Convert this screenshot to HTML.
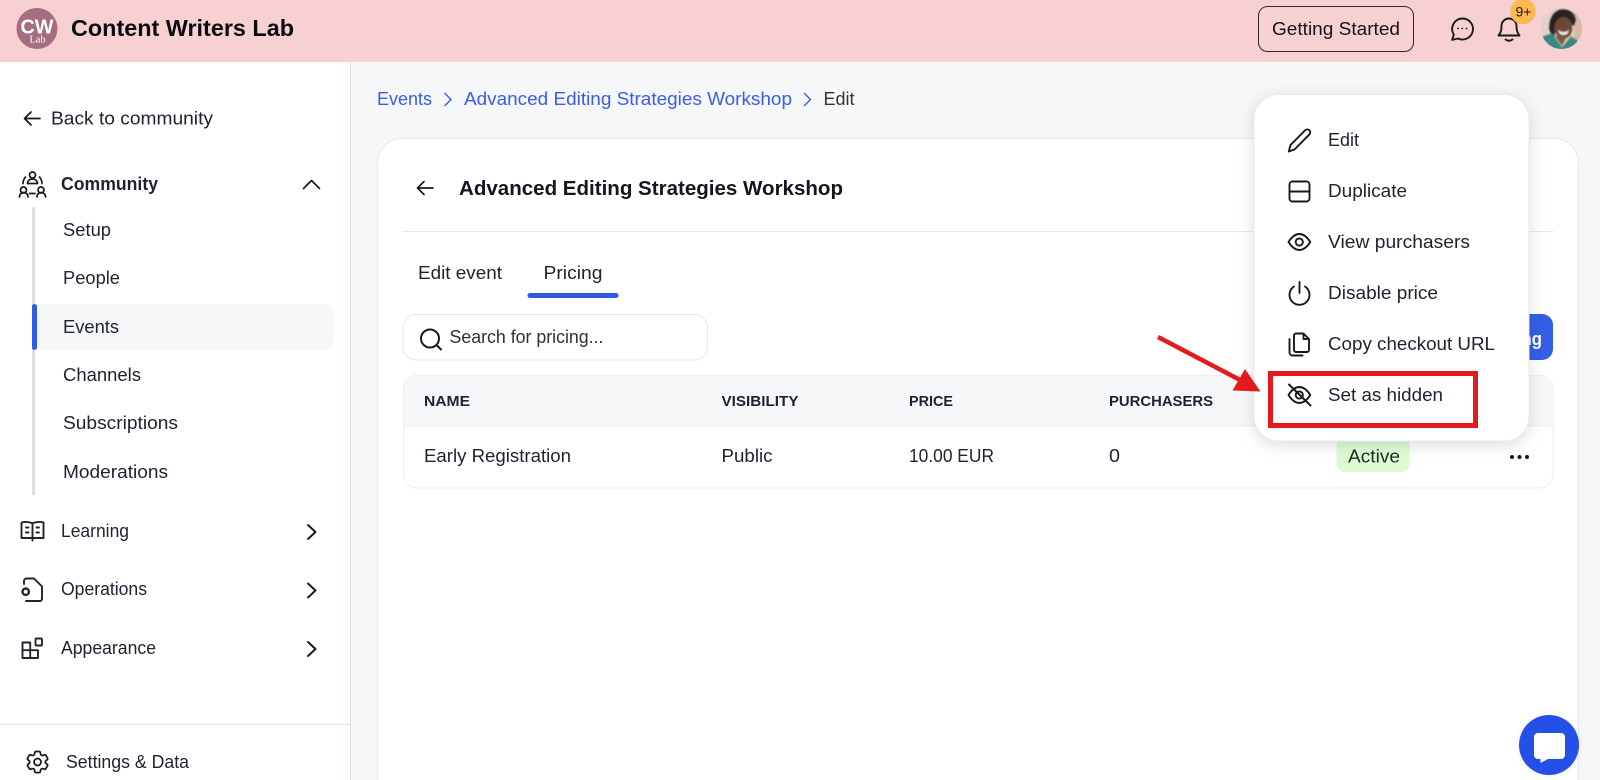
<!DOCTYPE html>
<html lang="en">
<head>
<meta charset="utf-8">
<title>Content Writers Lab</title>
<style>
html,body{margin:0;padding:0;width:1600px;height:780px;overflow:hidden;background:#f6f7f9}
svg{display:block}
text{font-family:"Liberation Sans",sans-serif;fill:#1d2230;font-size:18px}
.b{font-weight:700}
.i{fill:none;stroke:#1a1a1a;stroke-width:1.9;stroke-linecap:round;stroke-linejoin:round}
.h{font-size:15px;font-weight:700}
</style>
</head>
<body>
<svg width="1600" height="780" viewBox="0 0 1600 780" xmlns="http://www.w3.org/2000/svg">
<defs>
<filter id="sh" x="-20%" y="-20%" width="140%" height="140%"><feDropShadow dx="0" dy="4" stdDeviation="8" flood-color="#000" flood-opacity=".13"/></filter>
<filter id="soft"><feGaussianBlur stdDeviation=".8"/></filter>
<clipPath id="av"><circle cx="1561.500" cy="28.500" r="20.500"/></clipPath>
<clipPath id="thead"><rect x="403" y="375" width="1150" height="51"/></clipPath>
<radialGradient id="glow"><stop offset=".6" stop-color="#000" stop-opacity=".07"/><stop offset="1" stop-color="#000" stop-opacity="0"/></radialGradient>
</defs>

<rect width="1600" height="780" fill="#f6f7f9"/>

<!-- Sidebar -->
<rect x="0" y="62" width="350" height="718" fill="#fff"/>
<rect x="350" y="62" width="1" height="718" fill="#dde1e7"/>

<!-- Header -->
<rect width="1600" height="62" fill="#f7d0d1"/>
<circle cx="37" cy="28.500" r="20.500" fill="#a56d7f"/>
<text x="20.500" y="33.500" class="b" style="font-size:20px;fill:#fff" textLength="33" lengthAdjust="spacingAndGlyphs">CW</text>
<text x="29.500" y="42.500" style="font-family:'Liberation Serif',serif;font-size:10px;fill:#fff" textLength="16" lengthAdjust="spacingAndGlyphs">Lab</text>
<text x="71" y="36" class="b" style="font-size:23px;fill:#0b0b0f" textLength="223" lengthAdjust="spacingAndGlyphs">Content Writers Lab</text>

<rect x="1258.500" y="6.500" width="155" height="45" rx="9" fill="none" stroke="#2d2b2e" stroke-width="1"/>
<text x="1272" y="35" textLength="128" lengthAdjust="spacingAndGlyphs" style="fill:#12151f">Getting Started</text>
<path class="i" d="M1462.500 18.500a10.500 10.500 0 1 1-4.500 20l-5.800 1.300 1.600-5.200a10.500 10.500 0 0 1 8.700-16.100z"/>
<g fill="#1a1a1a"><circle cx="1458" cy="28.500" r=".9"/><circle cx="1462.300" cy="28.500" r=".9"/><circle cx="1466.500" cy="28.500" r=".9"/></g>
<path class="i" d="M1498.500 35.500h21c-2-2.500-3-4.500-3-9.500a7.500 7.500 0 0 0-15 0c0 5-1 7-3 9.500z"/>
<path class="i" d="M1505.500 39.500q3.500 2.500 7 0"/>
<circle cx="1523" cy="11.500" r="12.800" fill="#fdb84e"/>
<text x="1515.500" y="16.500" style="font-size:14px;fill:#1a1a1a" textLength="16" lengthAdjust="spacingAndGlyphs">9+</text>
<g clip-path="url(#av)"><g filter="url(#soft)">
<rect x="1538" y="5" width="48" height="48" fill="#e0d3c9"/>
<rect x="1574" y="5" width="12" height="48" fill="#d9b8a4"/>
<path d="M1549 30c-1-12 5-21 14-21s13 6 13 12l-2 5-10-5-8 6-2 14z" fill="#2a2220"/>
<ellipse cx="1563.500" cy="28" rx="9" ry="11" fill="#6d4636"/>
<path d="M1558 30q5.500 4 11 0q-1 5-5.500 5t-5.500-5z" fill="#f2ece8"/>
<path d="M1541 37l11-4 10 14 9-11 10 7v11h-40z" fill="#38897f"/>
<path d="M1555 36l7 10 6-11-5 1z" fill="#835542"/>
</g></g>

<!-- Sidebar content -->
<path class="i" d="M40 118.500H24.500M31 112l-6.500 6.500 6.500 6.500" style="stroke-width:1.700"/>
<text x="51" y="124.500" textLength="162" lengthAdjust="spacingAndGlyphs">Back to community</text>

<g class="i" style="stroke-width:1.700">
<circle cx="32.500" cy="175" r="3"/><path d="M27.500 183.500c0-6 10-6 10 0z"/>
<circle cx="23.500" cy="190" r="3"/><path d="M19.500 197c0-6 8.500-6 8.500 0"/>
<circle cx="41" cy="190" r="3"/><path d="M37 197c0-6 8.500-6 8.500 0"/>
<path d="M25.500 177q-2.500 3-2.500 6.500M39.500 177q2.500 3 2.500 6.500M29.500 193.500h5.500"/>
</g>
<text x="61" y="190" class="b" textLength="97" lengthAdjust="spacingAndGlyphs">Community</text>
<path class="i" d="M303.500 188.500l8-8 8 8" style="stroke-width:1.700"/>

<rect x="32" y="207" width="3" height="288" fill="#e0dede"/>
<rect x="34" y="304" width="300" height="46" rx="10" fill="#f6f7f9"/>
<rect x="32" y="304" width="5" height="46" rx="2.500" fill="#2f5be7"/>
<text x="63" y="236" textLength="48" lengthAdjust="spacingAndGlyphs">Setup</text>
<text x="63" y="284" textLength="57" lengthAdjust="spacingAndGlyphs">People</text>
<text x="63" y="333" textLength="56" lengthAdjust="spacingAndGlyphs">Events</text>
<text x="63" y="381" textLength="78" lengthAdjust="spacingAndGlyphs">Channels</text>
<text x="63" y="429" textLength="115" lengthAdjust="spacingAndGlyphs">Subscriptions</text>
<text x="63" y="478" textLength="105" lengthAdjust="spacingAndGlyphs">Moderations</text>

<g class="i" style="stroke-width:1.900;stroke:#23232d">
<path d="M21.500 522.500q6-1.500 11 .8 5-2.300 11-.8v15.500h-22zM32.500 523.300v17.200"/>
<path d="M26 527.500h2.500M26 532.500h2.500M36.500 527.500h2.500M36.500 532.500h2.500"/>
</g>
<text x="61" y="537" textLength="68" lengthAdjust="spacingAndGlyphs">Learning</text>
<path class="i" d="M308 525l7.500 7-7.500 7" style="stroke-width:2"/>

<g class="i" style="stroke-width:1.900;stroke:#23232d">
<path d="M24 584v-3a2.500 2.500 0 0 1 2.500-2.500h7.500l8 8v12.500a2 2 0 0 1-2 2H26"/>
<circle cx="25.700" cy="591.700" r="3.200" stroke-width="2.400"/>
</g>
<text x="61" y="595" textLength="86" lengthAdjust="spacingAndGlyphs">Operations</text>
<path class="i" d="M308 583.500l7.500 7-7.500 7" style="stroke-width:2"/>

<g class="i" style="stroke-width:1.900;stroke:#23232d">
<path d="M38 650.200v7.800H22.500v-15.500h7.700v7.700zM30.200 650.200H22.500M30.200 650.200V658"/>
<rect x="35.500" y="638.500" width="6.500" height="7" rx="1"/>
</g>
<text x="61" y="654" textLength="95" lengthAdjust="spacingAndGlyphs">Appearance</text>
<path class="i" d="M308 642l7.500 7-7.500 7" style="stroke-width:2"/>

<rect x="0" y="724" width="350" height="1" fill="#dde1e7"/>
<g transform="translate(23.500 748) scale(1.170)" class="i" style="stroke-width:1.500">
<path d="M9.594 3.940c.09-.542.56-.94 1.110-.94h2.593c.55 0 1.020.398 1.110.94l.213 1.281c.063.374.313.686.645.87.074.04.147.083.22.127.325.196.72.257 1.075.124l1.217-.456a1.125 1.125 0 0 1 1.370.49l1.296 2.247a1.125 1.125 0 0 1-.26 1.431l-1.003.827c-.293.241-.438.613-.43.992a7.723 7.723 0 0 1 0 .255c-.008.378.137.75.43.991l1.004.827c.424.35.534.955.26 1.430l-1.298 2.247a1.125 1.125 0 0 1-1.369.491l-1.217-.456c-.355-.133-.75-.072-1.076.124a6.470 6.470 0 0 1-.22.128c-.331.183-.581.495-.644.869l-.213 1.281c-.09.543-.56.94-1.110.94h-2.594c-.55 0-1.019-.398-1.110-.94l-.213-1.281c-.062-.374-.312-.686-.644-.87a6.520 6.520 0 0 1-.22-.127c-.325-.196-.72-.257-1.076-.124l-1.217.456a1.125 1.125 0 0 1-1.369-.49l-1.297-2.247a1.125 1.125 0 0 1 .26-1.431l1.004-.827c.292-.24.437-.613.43-.991a6.932 6.932 0 0 1 0-.255c.007-.38-.138-.751-.43-.992l-1.004-.827a1.125 1.125 0 0 1-.26-1.430l1.297-2.247a1.125 1.125 0 0 1 1.370-.491l1.216.456c.356.133.751.072 1.076-.124.072-.044.146-.086.22-.128.332-.183.582-.495.644-.869l.214-1.280Z"/>
<circle cx="12" cy="12" r="3"/>
</g>
<text x="66" y="768" textLength="123" lengthAdjust="spacingAndGlyphs">Settings &amp; Data</text>

<!-- Breadcrumb -->
<text x="377" y="105" style="fill:#3b5ce8" textLength="55" lengthAdjust="spacingAndGlyphs">Events</text>
<path d="M444.500 93l6.500 6.500-6.500 6.500" fill="none" stroke="#3b5ce8" stroke-width="1.400"/>
<text x="464" y="105" style="fill:#3b5ce8" textLength="328" lengthAdjust="spacingAndGlyphs">Advanced Editing Strategies Workshop</text>
<path d="M804 93l6.500 6.500-6.500 6.500" fill="none" stroke="#3b5ce8" stroke-width="1.400"/>
<text x="823.500" y="105" style="fill:#333" textLength="31" lengthAdjust="spacingAndGlyphs">Edit</text>

<!-- Card -->
<path d="M377.500 780V163.500a25 25 0 0 1 25-25h1151a25 25 0 0 1 25 25V780" fill="#fff" stroke="#e6e8ec"/>
<path class="i" d="M433 188H417.500M424 181.500l-6.500 6.500 6.500 6.500" style="stroke-width:1.700"/>
<text x="459" y="195" class="b" style="font-size:20px;fill:#14161f" textLength="384" lengthAdjust="spacingAndGlyphs">Advanced Editing Strategies Workshop</text>
<rect x="402" y="231" width="1151" height="1" fill="#e8e9ec"/>

<text x="418" y="279" textLength="84" lengthAdjust="spacingAndGlyphs">Edit event</text>
<text x="543.500" y="279" textLength="59" lengthAdjust="spacingAndGlyphs">Pricing</text>
<rect x="527.500" y="293" width="91" height="5" rx="2.500" fill="#2f5be0"/>

<rect x="403" y="314.500" width="304.500" height="45.500" rx="13" fill="#fff" stroke="#e6e8ec"/>
<circle cx="430" cy="338.500" r="9" class="i" style="stroke-width:2"/>
<path class="i" d="M436.500 345l4.500 4.500" style="stroke-width:2"/>
<text x="449.500" y="343" style="fill:#2e3138" textLength="154" lengthAdjust="spacingAndGlyphs">Search for pricing...</text>

<rect x="1430" y="314" width="123" height="46" rx="11" fill="#335ee6"/>
<text x="1448" y="345" class="b" style="fill:#fff" textLength="94" lengthAdjust="spacingAndGlyphs">Add pricing</text>

<!-- Table -->
<rect x="403.500" y="375.500" width="1149.500" height="112.500" rx="13" fill="#fff" stroke="#eceef1"/>
<g clip-path="url(#thead)"><rect x="404" y="376" width="1148" height="60" rx="13" fill="#f6f7f9"/></g>
<rect x="404" y="425.500" width="1149" height="1" fill="#eceef1"/>
<text x="424" y="406" class="h" textLength="46" lengthAdjust="spacingAndGlyphs">NAME</text>
<text x="721.500" y="406" class="h" textLength="77" lengthAdjust="spacingAndGlyphs">VISIBILITY</text>
<text x="909" y="406" class="h" textLength="44" lengthAdjust="spacingAndGlyphs">PRICE</text>
<text x="1109" y="406" class="h" textLength="104" lengthAdjust="spacingAndGlyphs">PURCHASERS</text>
<text x="424" y="462" textLength="147" lengthAdjust="spacingAndGlyphs">Early Registration</text>
<text x="721.500" y="462" textLength="51" lengthAdjust="spacingAndGlyphs">Public</text>
<text x="909" y="462" textLength="85" lengthAdjust="spacingAndGlyphs">10.00 EUR</text>
<text x="1109" y="462" textLength="11" lengthAdjust="spacingAndGlyphs">0</text>
<rect x="1336.500" y="436" width="73" height="36" rx="8" fill="#dffbd4"/>
<text x="1348" y="462.500" style="fill:#1f2a22" textLength="52" lengthAdjust="spacingAndGlyphs">Active</text>
<g fill="#1a1a1a"><circle cx="1512" cy="457" r="2"/><circle cx="1519.500" cy="457" r="2"/><circle cx="1527" cy="457" r="2"/></g>

<!-- Popup -->
<rect x="1254" y="94.500" width="275" height="346.500" rx="25" fill="#fff" stroke="#e9eaec" filter="url(#sh)"/>

<path class="i" d="M1290.500 145L1305.400 130a3 3 0 0 1 4.200 4.200L1294.500 149.500l-5.700 2z"/>
<text x="1328" y="146" textLength="31" lengthAdjust="spacingAndGlyphs">Edit</text>

<rect class="i" x="1289.500" y="181.500" width="20" height="20" rx="3"/>
<path class="i" d="M1289.500 191.500h20"/>
<text x="1328" y="197" textLength="79" lengthAdjust="spacingAndGlyphs">Duplicate</text>

<path class="i" d="M1288.500 242c3.500-5.500 7-8 10.800-8s7.500 2.500 11 8c-3.500 5.500-7.200 8-11 8s-7.300-2.500-10.800-8z"/>
<circle class="i" cx="1299.300" cy="242" r="3.600"/>
<text x="1328" y="248" textLength="142" lengthAdjust="spacingAndGlyphs">View purchasers</text>

<path class="i" d="M1299.500 282v11M1294 286.500a10 10 0 1 0 11 0"/>
<text x="1328" y="299" textLength="110" lengthAdjust="spacingAndGlyphs">Disable price</text>

<path class="i" d="M1296 333.500h7.500l5.500 5.500v11a2 2 0 0 1-2 2h-11a2 2 0 0 1-2-2v-14.500a2 2 0 0 1 2-2zM1303.500 333.500v5.500h5.500M1289.500 339v13.500a3 3 0 0 0 3 3h10"/>
<text x="1328" y="350" textLength="167" lengthAdjust="spacingAndGlyphs">Copy checkout URL</text>

<path class="i" d="M1288.500 395c3.500-5.500 7-8 10.800-8s7.500 2.500 11 8c-3.500 5.500-7.200 8-11 8s-7.300-2.500-10.800-8z"/>
<circle class="i" cx="1299.300" cy="395" r="3.600"/>
<path class="i" d="M1289 384.500l21.500 21" style="stroke-width:2"/>
<text x="1328" y="401" textLength="115" lengthAdjust="spacingAndGlyphs">Set as hidden</text>

<!-- Annotation -->
<rect x="1270.500" y="373.500" width="205" height="52" fill="none" stroke="#e41b1b" stroke-width="5"/>
<path d="M1158 337L1242 381" stroke="#e41b1b" stroke-width="4.500" fill="none"/>
<path d="M1260.500 391.500L1232.500 390.500L1245 369z" fill="#e41b1b"/>

<!-- Chat widget -->
<circle cx="1549" cy="745" r="35" fill="url(#glow)"/>
<circle cx="1549" cy="745" r="30" fill="#2450e8"/>
<path d="M1538 733h23a4 4 0 0 1 4 4v18a4 4 0 0 1-4 4h-13l-7.500 4v-4h-2.500a4 4 0 0 1-4-4v-18a4 4 0 0 1 4-4z" fill="#fff"/>
</svg>
</body>
</html>
